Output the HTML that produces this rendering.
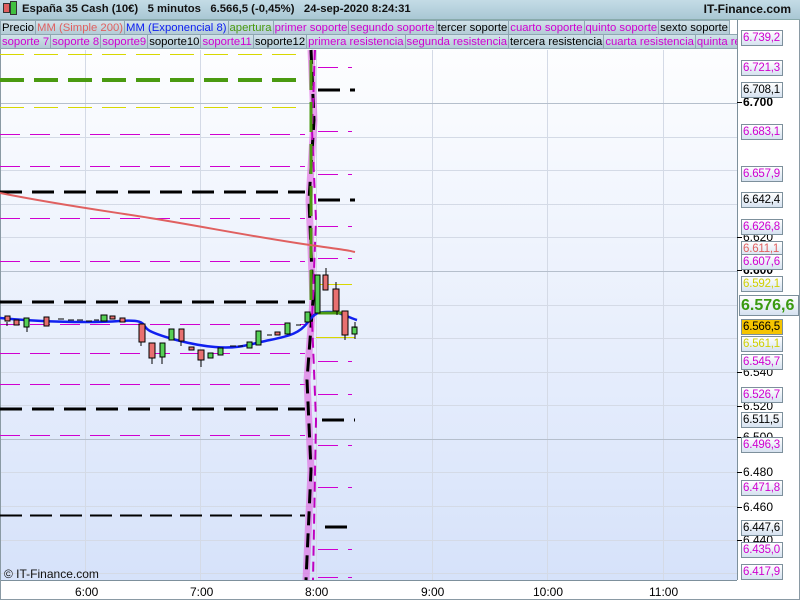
<!DOCTYPE html>
<html><head><meta charset="utf-8"><style>
body{margin:0;width:800px;height:600px;overflow:hidden;background:#fff;font-family:"Liberation Sans",sans-serif}
#hdr{position:absolute;left:0;top:0;width:800px;height:19px;background:linear-gradient(#c4dce6,#a9c7d4);border-bottom:1px solid #8aa;font-size:12px;font-weight:bold;line-height:19px;color:#111}
.row{position:absolute;left:0;height:15px;font-size:11.3px;line-height:14px;white-space:nowrap}
.row span{display:inline-block;background:linear-gradient(#d2e3ea,#b3cbd6);border:1px solid #8fa7b2;padding:0 1px;margin-right:-1px;height:13px}
.m{color:#d000d0}.k{color:#000}
.lb{position:absolute;left:741px;width:39px;height:14px;font-size:11.5px;line-height:14px;padding-left:1px;background:linear-gradient(#fff,#d6e2f0);border:1px solid #7d909c;box-sizing:content-box;overflow:hidden;white-space:nowrap;letter-spacing:-0.2px}
.ax{position:absolute;left:743px;font-size:12px;line-height:12px;color:#000}
</style></head><body>
<svg width="800" height="600" style="position:absolute;left:0;top:0">
<defs><linearGradient id="bg" x1="0" y1="0" x2="0" y2="1"><stop offset="0" stop-color="#ffffff"/><stop offset="1" stop-color="#d6e2fa"/></linearGradient></defs>
<rect x="0" y="20" width="737" height="560" fill="url(#bg)"/>
<g stroke="#d4dae6" stroke-width="1">
<line x1="0" x2="737" y1="137.5" y2="137.5"/><line x1="0" x2="737" y1="170.5" y2="170.5"/><line x1="0" x2="737" y1="204.5" y2="204.5"/><line x1="0" x2="737" y1="237.5" y2="237.5"/><line x1="0" x2="737" y1="305.5" y2="305.5"/><line x1="0" x2="737" y1="338.5" y2="338.5"/><line x1="0" x2="737" y1="372.5" y2="372.5"/><line x1="0" x2="737" y1="405.5" y2="405.5"/><line x1="0" x2="737" y1="472.5" y2="472.5"/><line x1="0" x2="737" y1="506.5" y2="506.5"/><line x1="0" x2="737" y1="540.5" y2="540.5"/><line x1="0" x2="737" y1="573.5" y2="573.5"/>
<line x1="85.5" x2="85.5" y1="50" y2="580"/><line x1="200.5" x2="200.5" y1="50" y2="580"/><line x1="316.5" x2="316.5" y1="50" y2="580"/><line x1="432.5" x2="432.5" y1="50" y2="580"/><line x1="547.5" x2="547.5" y1="50" y2="580"/><line x1="663.5" x2="663.5" y1="50" y2="580"/>
</g>
<g stroke="#b5bfcc"><line x1="0" x2="737" y1="103.5" y2="103.5"/><line x1="0" x2="737" y1="271.5" y2="271.5"/><line x1="0" x2="737" y1="439.5" y2="439.5"/></g>
<line x1="737.5" x2="737.5" y1="20" y2="580" stroke="#7d909c"/>
<line x1="0" x2="737" y1="580.5" y2="580.5" stroke="#7d909c"/>
<rect x="0.5" y="0.5" width="799" height="599" fill="none" stroke="#8a9aa4"/>
<g fill="none">
<path d="M0 54.5H305M0 107.5H305" stroke="#d8d800" stroke-dasharray="24 10"/>
<path d="M0 80H305" stroke="#4a9a10" stroke-width="4" stroke-dasharray="24 10"/>
<path d="M0 134.5H305M0 166.5H305M0 218.5H305M0 261.5H305M0 324.5H305M0 353.5H305M0 384.5H305M0 435.5H305" stroke="#d000d0" stroke-dasharray="20 10"/>
<path d="M0 192H305M0 302H305M0 409H305" stroke="#000" stroke-width="3" stroke-dasharray="22 10"/>
<path d="M0 515.5H305" stroke="#000" stroke-width="2" stroke-dasharray="22 8"/>
<path d="M318 67.5H352M318 131.5H352M318 174.5H352M318 226.5H352M318 258.5H352M318 361.5H352M318 394.5H352M318 445.5H352M318 487.5H352M318 549.5H352M318 577.5H352" stroke="#d000d0" stroke-dasharray="20 10"/>
<path d="M318 90H355M318 200H355M322 420H355M325 527H347" stroke="#000" stroke-width="3" stroke-dasharray="22 10"/>
<path d="M316 284.5H352M316 337.5H355M340 284.5H352" stroke="#d8d800"/>
<path d="M311 50L314 120L309 200L313 300L307 380L311 470L306 580" stroke="#e060e0" stroke-width="7" opacity=".6"/>
<path d="M311 50L314 120L309 200L313 300L307 380L311 470L306 580" stroke="#000" stroke-width="3" stroke-dasharray="14 8"/>
<path d="M315 50L312 130L316 220L312 320L316 420L313 580" stroke="#c000c0" stroke-width="2" stroke-dasharray="10 6"/>
<path d="M311 60V310" stroke="#4a9a10" stroke-width="3" stroke-dasharray="30 12"/>
<path d="M0 193C60 205 100 210 150 218S260 238 310 245S345 250 355 252" stroke="#e06060" stroke-width="2"/>
<path d="M0 318C40 322 90 323 120 321S140 326 150 331S190 345 215 347S250 344 270 340S300 333 308 322S320 312 330 312S350 318 357 320" stroke="#1020f0" stroke-width="2.5"/>
<path d="M318 313H344" stroke="#4a9a10" stroke-width="3"/>
</g>
<g stroke="#000" stroke-width="1">
<rect x="5" y="316" width="5" height="5" fill="#e87070"/><rect x="14" y="320" width="5" height="5" fill="#e87070"/><rect x="24" y="318" width="5" height="9" fill="#55d055"/>
<rect x="44" y="317" width="5" height="9" fill="#e87070"/><rect x="101" y="315" width="6" height="6" fill="#55d055"/><rect x="110" y="316" width="5" height="3" fill="#e87070"/><rect x="120" y="318" width="5" height="4" fill="#e87070"/>
<rect x="139" y="324" width="6" height="18" fill="#e87070"/><rect x="149" y="343" width="6" height="15" fill="#e87070"/><rect x="160" y="343" width="5" height="14" fill="#55d055"/>
<rect x="169" y="329" width="5" height="11" fill="#55d055"/><rect x="179" y="329" width="5" height="12" fill="#e87070"/><rect x="189" y="347" width="5" height="3" fill="#e87070"/>
<rect x="198" y="350" width="6" height="10" fill="#e87070"/><rect x="208" y="353" width="5" height="5" fill="#55d055"/><rect x="218" y="348" width="5" height="7" fill="#55d055"/>
<rect x="247" y="342" width="5" height="6" fill="#55d055"/><rect x="256" y="331" width="5" height="14" fill="#55d055"/><rect x="275" y="332" width="5" height="3" fill="#e87070"/><rect x="285" y="323" width="5" height="11" fill="#55d055"/><rect x="305" y="312" width="5" height="10" fill="#55d055"/>
<rect x="315" y="275" width="5" height="38" fill="#55d055"/><rect x="323" y="275" width="5" height="15" fill="#e87070"/><rect x="333" y="289" width="6" height="22" fill="#e87070"/><rect x="342" y="311" width="6" height="24" fill="#e87070"/><rect x="352" y="327" width="5" height="7" fill="#55d055"/>
<path d="M58 319h6M68 320h6M77 320h6M86 321h6M94 320h5M230 346h6M238 346h5M267 335h5M296 325h5M7 322v4M27 327v5M141 342v4M152 358v6M162 357v7M181 341v5M201 360v7M326 268v7M336 282v7M337 311v4M345 335v5M355 322v6M355 334v5"/>
</g>
<g font-family="Liberation Sans" font-size="12" fill="#000">
<text x="75" y="596">6:00</text><text x="190" y="596">7:00</text><text x="305" y="596">8:00</text><text x="421" y="596">9:00</text><text x="533" y="596">10:00</text><text x="649" y="596">11:00</text>
<text x="4" y="578" fill="#111">© IT-Finance.com</text>
</g>
<g stroke="#000"><path d="M737 102.5h5M737 237.5h5M737 270.5h5M737 372.5h5M737 406.5h5M737 437.5h5M737 472.5h5M737 507.5h5M737 540.5h5"/></g>
</svg>
<div id="hdr"><span style="position:absolute;left:3px;top:3px;width:5px;height:8px;background:#e06060;border:1px solid #333"></span><span style="position:absolute;left:10px;top:1px;width:5px;height:12px;background:#40c040;border:1px solid #333"></span><span style="position:absolute;left:22px;font-size:11.3px">España 35 Cash (10€)&nbsp;&nbsp;&nbsp;5 minutos&nbsp;&nbsp;&nbsp;6.566,5 (-0,45%)&nbsp;&nbsp;&nbsp;24-sep-2020 8:24:31</span><span style="position:absolute;right:9px">IT-Finance.com</span></div>
<div class="row" style="top:20px"><span class="k">Precio</span><span style="color:#e06060">MM (Simple 200)</span><span style="color:#1020f0">MM (Exponencial 8)</span><span style="color:#4a9a10">apertura</span><span class="m">primer soporte</span><span class="m">segundo soporte</span><span class="k">tercer soporte</span><span class="m">cuarto soporte</span><span class="m">quinto soporte</span><span class="k">sexto soporte</span></div>
<div class="row" style="top:34px;width:737px;overflow:hidden"><span class="m">soporte 7</span><span class="m">soporte 8</span><span class="m">soporte9</span><span class="k">soporte10</span><span class="m">soporte11</span><span class="k">soporte12</span><span class="m">primera resistencia</span><span class="m">segunda resistencia</span><span class="k">tercera resistencia</span><span class="m">cuarta resistencia</span><span class="m">quinta resistencia</span></div>
<div class="ax" style="top:96px;font-weight:bold">6.700</div>
<div class="ax" style="top:231px">6.620</div>
<div class="ax" style="top:264px;font-weight:bold">6.600</div>
<div class="ax" style="top:366px">6.540</div>
<div class="ax" style="top:400px">6.520</div>
<div class="ax" style="top:431px">6.500</div>
<div class="ax" style="top:466px">6.480</div>
<div class="ax" style="top:501px">6.460</div>
<div class="ax" style="top:534px">6.440</div>
<div class="lb m" style="top:30px">6.739,2</div>
<div class="lb m" style="top:60px">6.721,3</div>
<div class="lb k" style="top:82px">6.708,1</div>
<div class="lb m" style="top:124px">6.683,1</div>
<div class="lb m" style="top:166px">6.657,9</div>
<div class="lb k" style="top:192px">6.642,4</div>
<div class="lb m" style="top:219px">6.626,8</div>
<div class="lb" style="top:241px;color:#e06060">6.611,1</div>
<div class="lb m" style="top:254px">6.607,6</div>
<div class="lb" style="top:276px;color:#d0d000">6.592,1</div>
<div class="lb" style="top:295px;left:739px;width:57px;height:19px;line-height:19px;font-size:16px;font-weight:bold;color:#3a9a10;letter-spacing:0">6.576,6</div>
<div class="lb" style="top:319px;background:#f5c400;color:#000">6.566,5</div>
<div class="lb" style="top:336px;color:#d0d000">6.561,1</div>
<div class="lb m" style="top:354px">6.545,7</div>
<div class="lb m" style="top:387px">6.526,7</div>
<div class="lb k" style="top:412px">6.511,5</div>
<div class="lb m" style="top:437px">6.496,3</div>
<div class="lb m" style="top:480px">6.471,8</div>
<div class="lb k" style="top:520px">6.447,6</div>
<div class="lb m" style="top:542px">6.435,0</div>
<div class="lb m" style="top:564px">6.417,9</div>
</body></html>
